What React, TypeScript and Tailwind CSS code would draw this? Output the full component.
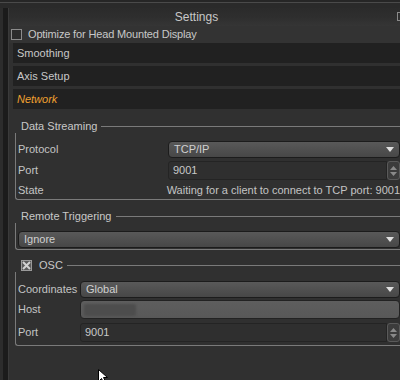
import React from 'react';

const font = { fontFamily: '"Liberation Sans", Arial, sans-serif' };

const Combo = ({ label, className = '' }: { label: string; className?: string }) => (
  <div className={`flex items-center justify-between h-[17px] rounded-[4px] border border-[#1c1c1c] bg-gradient-to-b from-[#595959] to-[#474747] pl-[5px] pr-[5px] ${className}`}>
    <span className="text-[#d0d0d0]">{label}</span>
    <svg width="8" height="5" viewBox="0 0 8 5"><path d="M0 0h8L4 5z" fill="#e0e0e0" /></svg>
  </div>
);

const SpinInput = ({ value, className = '' }: { value: string; className?: string }) => (
  <div className={`flex h-[19px] ${className}`}>
    <div className="flex-1 flex items-center rounded-l-[3px] border border-[#242424] bg-[#2f2f2f] pl-[4px] text-[#c8c8c8]">{value}</div>
    <div className="w-[13px] flex flex-col items-center justify-center gap-[2px] rounded-[3px] border border-[#5a5a5a] bg-[#3c3c3c]">
      <svg width="7" height="4" viewBox="0 0 7 4"><path d="M0 4h7L3.5 0z" fill="#8a8a8a" /></svg>
      <svg width="7" height="4" viewBox="0 0 7 4"><path d="M0 0h7L3.5 4z" fill="#8a8a8a" /></svg>
    </div>
  </div>
);

const GroupTitle = ({ title, className = '' }: { title: React.ReactNode; className?: string }) => (
  <div className={`flex items-center h-[14px] ml-[6px] ${className}`}>
    <span className="pl-[6px] pr-[4px] text-[#c8c8c8] flex items-center">{title}</span>
    <div className="flex-1 h-px bg-[#7a7a7a]" />
  </div>
);

export default function App() {
  return (
    <div className="relative w-[400px] h-[380px] overflow-hidden bg-[#303030] text-[11px] leading-none text-[#c4c4c4]" style={font}>
      <div className="h-[8px] bg-[#2a2a2a] border-t-2 border-t-[#262626]">
        <div className="h-px bg-[#4a4a4a]" />
      </div>
      <div className="flex h-[372px]">
        <div className="w-[3px] bg-[#2c2c2c]" />
        <div className="w-[5px] bg-[#1b1b1b]" />
        <div className="w-px bg-[#3a3a3a]" />
        <div className="flex-1 flex flex-col">
          <div className="relative h-[18px] flex items-center justify-center bg-gradient-to-b from-[#2b2b2b] via-[#2e2e2e] to-[#353535] pr-[16px] text-[12px] text-[#c8c8c8]">
            Settings
            <div className="absolute right-0 top-[4px] w-[3px] h-[9px] border border-[#8a8a8a] border-r-0" />
          </div>
          <div className="flex items-center h-[17px] pl-[2px] bg-[#333333]">
            <div className="w-[11px] h-[11px] border border-[#8c8c8c] bg-[#2c2c2c]" />
            <span className="ml-[6px] text-[#c8c8c8] tracking-[-0.15px]">Optimize for Head Mounted Display</span>
          </div>
          <div className="ml-[4px] flex flex-col gap-[3px]">
            <div className="h-[20px] flex items-center pl-[4px] bg-[#212121] text-[#c8c8c8]">Smoothing</div>
            <div className="h-[20px] flex items-center pl-[4px] bg-[#212121] text-[#c8c8c8]">Axis Setup</div>
            <div className="h-[20px] flex items-center pl-[4px] bg-[#212121] text-[#f0a030] italic">Network</div>
          </div>

          <GroupTitle title="Data Streaming" className="mt-[10px]" />
          <div className="ml-[6px] h-[67px] border-l border-b border-[#7a7a7a] rounded-bl-[3px] flex flex-col pl-[2px] pt-[8px]">
            <div className="flex items-center h-[17px]">
              <span className="w-[150px]">Protocol</span>
              <Combo label="TCP/IP" className="flex-1" />
            </div>
            <div className="flex items-center h-[19px] mt-[3px]">
              <span className="w-[150px]">Port</span>
              <SpinInput value="9001" className="flex-1" />
            </div>
            <div className="flex items-center justify-between h-[14px] mt-[3px]">
              <span>State</span>
              <span>Waiting for a client to connect to TCP port: 9001</span>
            </div>
          </div>

          <GroupTitle title="Remote Triggering" className="mt-[9px]" />
          <div className="ml-[6px] h-[27px] border-l border-b border-[#7a7a7a] rounded-bl-[3px] pl-[2px] pt-[8px]">
            <Combo label="Ignore" />
          </div>

          <GroupTitle
            className="mt-[8px]"
            title={
              <>
                <span className="relative w-[11px] h-[11px] border border-[#9a9a9a] bg-[#3a3a3a] mr-[7px] flex items-center justify-center">
                  <svg width="9" height="9" viewBox="0 0 9 9"><path d="M1 1l7 7M8 1L1 8" stroke="#d8d8d8" strokeWidth="2" /><rect x="0" y="0" width="9" height="9" fill="#bcbcbc" opacity="0.25" /></svg>
                </span>
                OSC
              </>
            }
          />
          <div className="ml-[6px] h-[74px] border-l border-b border-[#7a7a7a] rounded-bl-[3px] pl-[2px] pt-[9px]">
            <div className="flex items-center h-[17px]">
              <span className="w-[62px]">Coordinates</span>
              <Combo label="Global" className="flex-1" />
            </div>
            <div className="flex items-center h-[19px] mt-[2px]">
              <span className="w-[62px]">Host</span>
              <div className="flex-1 h-[19px] rounded-[4px] border border-[#222222] bg-gradient-to-b from-[#5e5e5e] to-[#585858] flex items-center pl-[3px]">
                <div className="w-[52px] h-[12px] rounded-[2px] bg-[#4d4d4d] blur-[1px]" />
              </div>
            </div>
            <div className="flex items-center h-[19px] mt-[4px]">
              <span className="w-[62px]">Port</span>
              <SpinInput value="9001" className="flex-1" />
            </div>
          </div>
        </div>
      </div>
      <svg className="absolute left-[98px] top-[369px]" width="12" height="14" viewBox="0 0 12 14">
        <path d="M0.5 0.5v12l3-3 2 4 2-1-2-4h4z" fill="#ffffff" stroke="#000000" strokeWidth="1" />
      </svg>
    </div>
  );
}
